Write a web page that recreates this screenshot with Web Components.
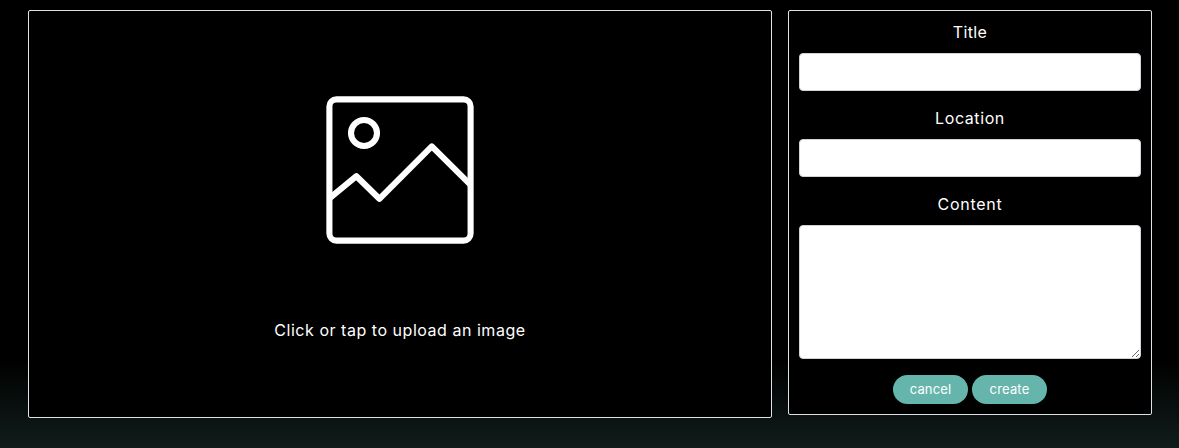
<!DOCTYPE html>
<html lang="en"><head><meta charset="utf-8"><title>Create post</title>
<style>
html{height:100%;background:#000}
body{margin:0;height:448px;overflow:hidden;background:linear-gradient(#000 0,#000 360px,#101d1b 448px);color:#fff;font:16px/22px Inter,sans-serif}
</style></head><body>
<post-editor>
 <image-drop slot="media">Click or tap to upload an image</image-drop>
 <post-form slot="form">
  <form-field style="--ls:.35px">Title</form-field>
  <form-field style="--ls:.6px">Location</form-field>
  <form-field multiline style="--ls:.75px">Content</form-field>
  <pill-button slot="actions">cancel</pill-button>
  <pill-button slot="actions">create</pill-button>
 </post-form>
</post-editor>
<script>
const define=(name,html)=>customElements.define(name,class extends HTMLElement{
 constructor(){super();const t=document.createElement('template');
  t.innerHTML=typeof html==='function'?html(this):html;
  this.attachShadow({mode:'open'}).append(t.content.cloneNode(true));}
});
define('post-editor',`<style>:host{display:grid;grid-template-columns:744px 364px;gap:16px;padding:10px 27px 0 28px;align-items:start}</style><slot name="media"></slot><slot name="form"></slot>`);
define('image-drop',`<style>
:host{display:flex;box-sizing:border-box;height:408px;border:1px solid #dee2e6;border-radius:2px;background:#000;flex-direction:column;align-items:center;padding-top:85px}
svg{display:block;width:148px;height:148px;fill:none;stroke:#fff;stroke-width:6.1;stroke-linejoin:round}
span{margin-top:75px;letter-spacing:.53px;white-space:nowrap}
</style><svg viewBox="0 0 148 148"><rect x="3.4" y="3.4" width="141.2" height="141.2" rx="7"/><circle cx="38" cy="37" r="13"/><path d="M3.4 102.3 30.4 80.2 53.4 102.8 105.8 50.4 144.6 88.8"/></svg><span><slot></slot></span>`);
define('post-form',`<style>
:host{display:block;box-sizing:border-box;height:405px;border:1px solid #dee2e6;border-radius:2px;background:#000;padding:10px}
.fields{display:flex;flex-direction:column;gap:16px}
.actions{display:flex;justify-content:center;gap:4px;margin-top:16px}
</style><div class="fields"><slot></slot></div><div class="actions"><slot name="actions"></slot></div>`);
define('form-field',el=>`<style>
:host{display:flex;flex-direction:column;gap:8px;text-align:center;letter-spacing:var(--ls,0)}
label{display:block;height:24px}
input,textarea{display:block;box-sizing:border-box;width:100%;height:38px;margin:0;padding:6px 12px;border:1px solid #ced4da;border-radius:4px;background:#fff;font:inherit;outline:0}
textarea{height:134px;resize:vertical}
</style><label for="control"><slot></slot></label>${el.hasAttribute('multiline')?'<textarea id="control"></textarea>':'<input id="control">'}`);
define('pill-button',`<style>
:host{display:block}
button{display:block;box-sizing:border-box;width:75px;height:29px;padding:0;border:0;border-radius:15px;background:#66b5ac;color:#fff;font:13px/29px Inter,sans-serif;letter-spacing:.16px}
</style><button type="button"><slot></slot></button>`);
</script></body></html>
